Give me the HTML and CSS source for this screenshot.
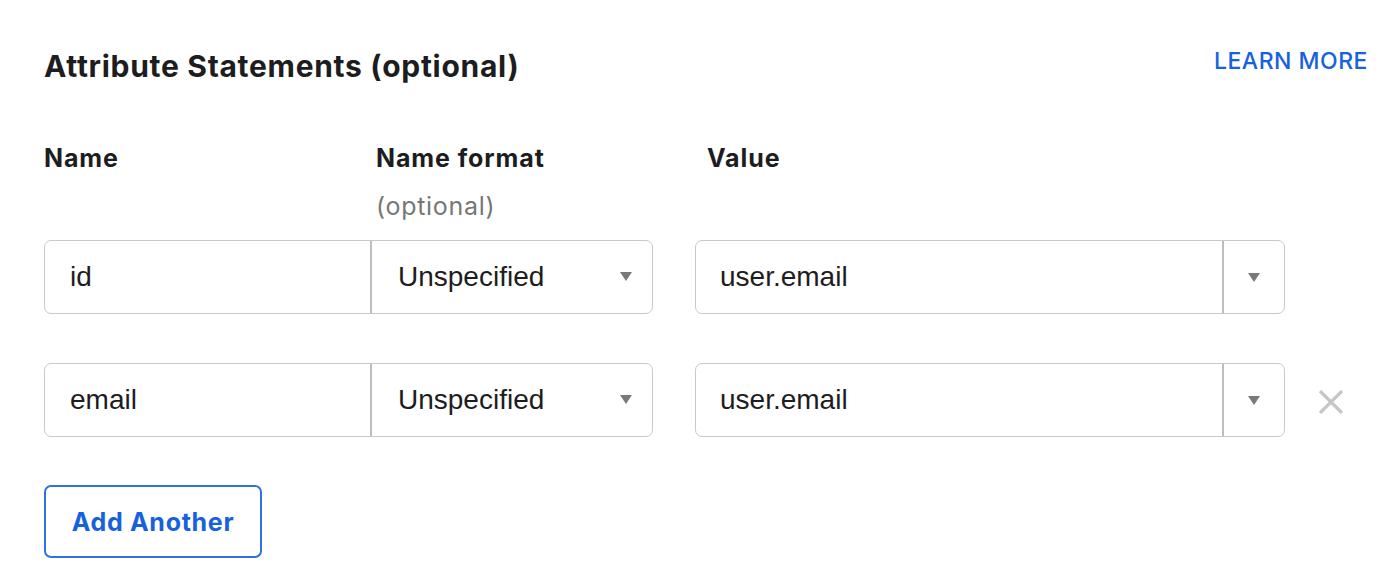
FILE: index.html
```html
<!DOCTYPE html>
<html>
<head>
<meta charset="utf-8">
<link rel="stylesheet" href="styles.css">
</head>
<body>
<div class="page">
  <div class="header">
    <h2 class="title">Attribute Statements (optional)</h2>
    <a class="learn" href="#">LEARN MORE</a>
  </div>
  <div class="labels">
    <div class="col-name label">Name</div>
    <div class="col-format label">Name format<div class="sub">(optional)</div></div>
    <div class="col-value label">Value</div>
  </div>
  <div class="row">
    <div class="pair">
      <div class="field name-field">id</div>
      <div class="field select-field">Unspecified<span class="caret"></span></div>
    </div>
    <div class="combo">
      <div class="combo-text">user.email</div>
      <div class="combo-btn"><span class="caret"></span></div>
    </div>
  </div>
  <div class="row">
    <div class="pair">
      <div class="field name-field">email</div>
      <div class="field select-field">Unspecified<span class="caret"></span></div>
    </div>
    <div class="combo">
      <div class="combo-text">user.email</div>
      <div class="combo-btn"><span class="caret"></span></div>
    </div>
    <div class="remove">
      <svg width="26" height="24" viewBox="0 0 26 24"><path d="M2 1 L24 23 M24 1 L2 23" stroke="#c6c6c6" stroke-width="3.2" fill="none"/></svg>
    </div>
  </div>
  <button class="add">Add Another</button>
</div>
</body>
</html>
```

FILE: styles.css
```css
* { box-sizing: border-box; }
html, body { margin: 0; padding: 0; background: #fff; }
body { font-family: "Inter", "Liberation Sans", sans-serif; color: #1d1d21; }
.page { padding: 45px 32px 0 44px; width: 1400px; }
.header { display: flex; justify-content: space-between; align-items: flex-start; }
.title { margin: 0; font-size: 30px; line-height: 42px; font-weight: 700; letter-spacing: 0.7px; }
.learn { font-size: 23px; line-height: 30px; color: #1662dd; text-decoration: none; font-weight: 500; letter-spacing: 0.5px; margin-top: 1px; }
.labels { display: flex; margin-top: 55px; height: 98px; }
.label { font-size: 25px; line-height: 32px; font-weight: 700; letter-spacing: 0.9px; }
.col-name { width: 332px; }
.col-format { width: 331px; }
.sub { font-weight: 400; color: #777; margin-top: 16px; font-size: 25px; letter-spacing: 0.7px; }
.row { display: flex; align-items: center; height: 74px; margin-bottom: 49px; }
.pair { display: flex; width: 609px; height: 74px; border: 1.5px solid #c9c9c9; border-radius: 7px; }
.field { font-family: "Liberation Sans", Arial, sans-serif; font-size: 28px; color: #1d1d21; display: flex; align-items: center; }
.name-field { width: 327px; padding-left: 25px; border-right: 2px solid #bdbdbd; }
.select-field { flex: 1; padding-left: 26px; position: relative; }
.caret { width: 0; height: 0; border-left: 6px solid transparent; border-right: 6px solid transparent; border-top: 9px solid #7a7a7a; display: block; }
.select-field .caret { position: absolute; right: 20px; top: 31px; }
.combo { display: flex; width: 590px; height: 74px; margin-left: 42px; border: 1.5px solid #c9c9c9; border-radius: 7px; }
.combo-text { flex: 1; font-family: "Liberation Sans", Arial, sans-serif; font-size: 28px; display: flex; align-items: center; padding-left: 24px; border-right: 2px solid #bdbdbd; }
.combo-btn { width: 60px; display: flex; align-items: center; justify-content: center; }
.remove { margin-left: 33px; display: flex; align-items: center; padding-top: 4px; }
.add { display: block; font-family: "Inter", "Liberation Sans", sans-serif; font-size: 25px; font-weight: 700; letter-spacing: 0.7px; color: #1662dd; background: #fff; border: 2px solid #2f71e0; border-radius: 7px; width: 218px; height: 73px; padding: 0; margin-top: -1px; }
```
